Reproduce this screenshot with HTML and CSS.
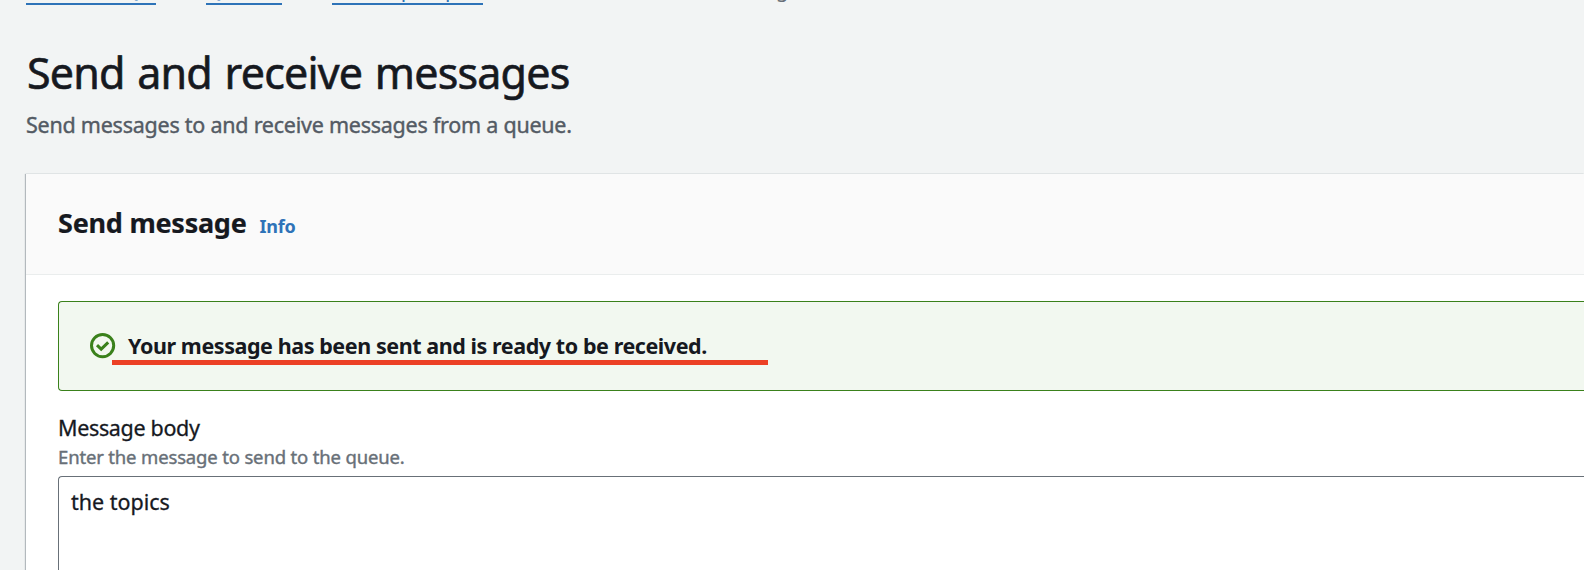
FILE: index.html
```
<!DOCTYPE html>
<html lang="en">
<head>
<meta charset="utf-8">
<title>Send and receive messages</title>
<link rel="stylesheet" href="styles.css">
</head>
<body>
<nav class="breadcrumbs">
  <a class="crumb crumb-service">Amazon SQS</a><span class="separator">/</span>
  <a class="crumb crumb-queues">Queues</a><span class="separator">/</span>
  <a class="crumb crumb-queue">TestsSqs-Topics</a><span class="separator">/</span>
  <span class="crumb-current">Send and receive messages</span>
</nav>
<header class="page-header">
  <h1 class="title">Send and receive messages</h1>
  <p class="subtitle">Send messages to and receive messages from a queue.</p>
</header>
<main class="panel">
  <div class="panel-header">
    <h2 class="panel-title">Send message</h2>
    <a class="info">Info</a>
  </div>
  <div class="panel-body">
    <div class="alert">
      <svg class="alert-icon" viewBox="0 0 26 26" fill="none" stroke="#3a811b" stroke-width="3">
        <circle cx="12.6" cy="12.6" r="11.1"/>
        <path d="M7 12.2 11.2 16.2 18.2 9.4"/>
      </svg>
      <span class="alert-text">Your message has been sent and is ready to be received.</span>
      <span class="marker"></span>
    </div>
    <label class="label">Message body</label>
    <p class="hint">Enter the message to send to the queue.</p>
    <div class="textarea">the topics</div>
  </div>
</main>
</body>
</html>
```
FILE: styles.css
```
* { box-sizing: border-box; }
body {
  display: flex;
  flex-direction: column;
  margin: 0;
  height: 570px;
  overflow: hidden;
  background: #f2f4f4;
  color: #16191f;
  font-family: "Noto Sans", "Open Sans", sans-serif;
  font-size: 22px;
  white-space: nowrap;
}
h1, h2, p { margin: 0; font-weight: 400; }
.breadcrumbs {
  display: flex;
  flex: none;
  height: 32px;
  margin-top: -27px;
  padding-left: 26px;
  font-size: 21px;
  line-height: 32px;
  color: #687078;
}
.crumb {
  height: 32px;
  border-bottom: 2px solid #2e73b8;
  color: #2e73b8;
}
.crumb-service { width: 130px; }
.crumb-queues { width: 76px; }
.crumb-queue { width: 151px; }
.separator { width: 50px; padding-right: 8px; text-align: center; }
.crumb-current { padding-left: 6px; }
.page-header { flex: none; padding: 41px 0 0 26px; }
.title {
  height: 64px;
  padding-left: 1px;
  font-size: 43px;
  line-height: 54px;
  letter-spacing: -0.8px;
  word-spacing: 2.2px;
  -webkit-text-stroke: 0.6px;
}
.subtitle {
  height: 64px;
  font-size: 21.5px;
  line-height: 30px;
  letter-spacing: -0.24px;
  color: #545b64;
  -webkit-text-stroke: 0.4px;
}
.panel {
  display: flex;
  flex-direction: column;
  flex: 1;
  min-height: 0;
  margin-left: 26px;
  background: #fff;
  box-shadow: -1px 0 1px #b3b9bd, 0 -1px 0 #eaeded;
}
.panel-header {
  display: flex;
  flex: none;
  align-items: baseline;
  gap: 13px;
  height: 101px;
  padding: 30px 32px 0;
  border-bottom: 1px solid #eaeded;
  background: #fafafa;
}
.panel-title {
  font-size: 27px;
  font-weight: 700;
  line-height: 38px;
  letter-spacing: -0.25px;
  -webkit-text-stroke: 0.2px;
}
.info {
  font-size: 18px;
  font-weight: 700;
  letter-spacing: -0.2px;
  color: #2e73b8;
}
.panel-body {
  display: flex;
  flex-direction: column;
  flex: 1;
  min-height: 0;
  padding: 26px 0 0 32px;
}
.alert {
  position: relative;
  display: flex;
  flex: none;
  align-items: center;
  gap: 12px;
  height: 90px;
  padding-left: 31px;
  border: 1px solid #3a811b;
  border-right: 0;
  border-radius: 4px 0 0 4px;
  background: #f2f8f0;
}
.alert-icon { width: 26px; height: 26px; }
.alert-text {
  font-size: 21.5px;
  font-weight: 700;
  line-height: 30px;
  letter-spacing: -0.43px;
}
.marker {
  position: absolute;
  left: 53px;
  top: 58px;
  width: 656px;
  height: 5px;
  background: #ec4125;
}
.label {
  flex: none;
  height: 32px;
  margin-top: 22px;
  font-size: 21.5px;
  line-height: 30px;
  letter-spacing: -0.34px;
  -webkit-text-stroke: 0.3px;
}
.hint {
  flex: none;
  height: 31px;
  font-size: 18.5px;
  line-height: 24px;
  letter-spacing: -0.16px;
  color: #687078;
  -webkit-text-stroke: 0.4px;
}
.textarea {
  flex: 1;
  padding: 10px 12px;
  border: 1px solid #687078;
  border-width: 1px 0 0 1px;
  border-radius: 4px 0 0 0;
  font-size: 21.5px;
  line-height: 30px;
  -webkit-text-stroke: 0.3px;
}
```
